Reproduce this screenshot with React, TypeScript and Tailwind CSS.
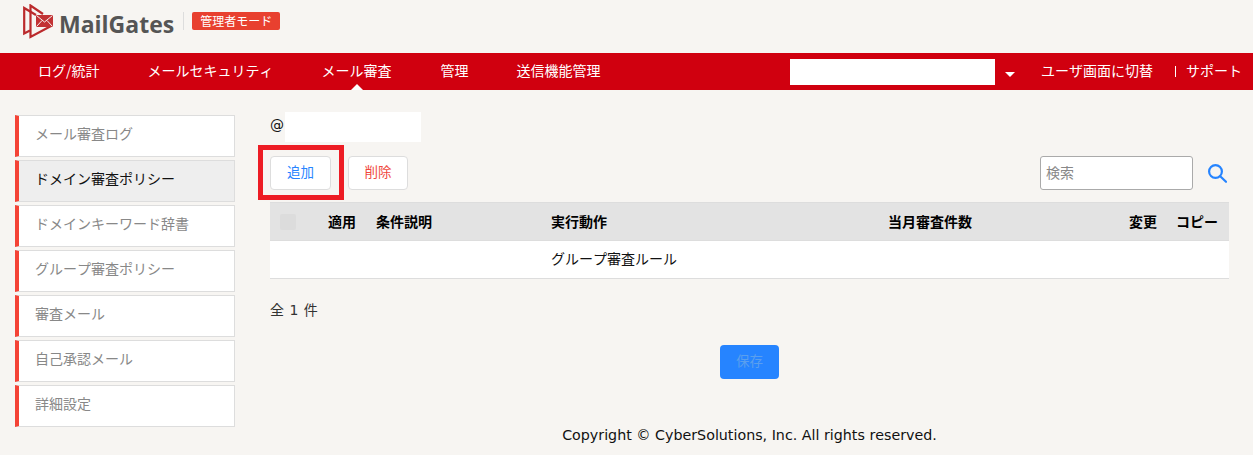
import React from "react";

const font = { fontFamily: '"Noto Sans CJK JP", sans-serif' };

const navItems = ["ログ/統計", "メールセキュリティ", "メール審査", "管理", "送信機能管理"];
const sideItems = ["メール審査ログ", "ドメイン審査ポリシー", "ドメインキーワード辞書", "グループ審査ポリシー", "審査メール", "自己承認メール", "詳細設定"];

function Logo() {
  return (
    <svg width="31" height="35" viewBox="0 0 31 35" className="shrink-0">
      <path d="M13 11 L1.2 4 L1.2 29.5 L7 26.5" fill="none" stroke="#bb2a2c" strokeWidth="2.2" />
      <path d="M20 10 L7.5 1.5 L7.5 33 L28 22" fill="none" stroke="#bb2a2c" strokeWidth="2.2" />
      <path d="M13 11 L30 11 L30 23 L13 23 Z" fill="#c23234" />
      <path d="M13.5 11.5 L21.5 18 L29.5 11.5 M13.5 22.5 L19 16.5 M29.5 22.5 L24 16.5" fill="none" stroke="#f7f5f2" strokeWidth="1" />
    </svg>
  );
}

export default function App() {
  return (
    <div style={font} className="relative w-[1253px] h-[455px] overflow-hidden bg-[#f7f5f2] text-[14px] text-[#111] [font-kerning:none]">
      <header className="h-[53px] flex items-center pl-[23px] pb-[11px]">
        <Logo />
        <span className="ml-[5px] mt-[6px] text-[23px] leading-none font-bold text-[#555]" style={{ fontFamily: '"Open Sans", sans-serif' }}>MailGates</span>
        <span className="ml-[9px] w-px h-[18px] bg-[#ddd]" />
        <span className="ml-[8px] w-[88px] h-[18px] rounded-[2px] bg-[#e8402f] text-white text-[12px] leading-[17px] text-center">管理者モード</span>
      </header>

      <nav className="relative h-[37px] bg-[#d0000f] text-white flex items-center pl-[38px]">
        <div className="flex gap-[48px]">
          {navItems.map((t, i) => (
            <span key={t} className={`relative h-[37px] leading-[34px] text-[14px] ${i === 3 ? "ml-[1px]" : ""}`}>
              {t}
              {i === 2 && <span className="absolute left-1/2 -translate-x-1/2 bottom-0 w-0 h-0 border-x-[6px] border-x-transparent border-b-[6px] border-b-white" />}
            </span>
          ))}
        </div>
        <div className="ml-auto flex items-center pr-[11px] h-[37px]">
          <div className="w-[205px] h-[26px] bg-white" />
          <span className="ml-[10px] mt-[5px] w-0 h-0 border-x-[5px] border-x-transparent border-t-[5px] border-t-white" />
          <span className="ml-[26px] leading-[34px] h-[37px]">ユーザ画面に切替</span>
          <span className="ml-[22px] w-px h-[11px] bg-white" />
          <span className="ml-[10px] leading-[34px] h-[37px]">サポート</span>
        </div>
      </nav>

      <div className="flex pl-[15px] pr-[24px]">
        <aside className="w-[220px] mt-[25px] flex flex-col gap-[3px] shrink-0">
          {sideItems.map((t, i) => (
            <div key={t} className={`h-[42px] border border-[#ddd] border-l-[4px] border-l-[#f44336] pl-[16px] leading-[34px] ${i === 1 ? "bg-[#eee] text-[#111]" : "bg-white text-[#888]"}`}>
              {t}
            </div>
          ))}
        </aside>

        <main className="flex-1 ml-[35px]">
          <div className="mt-[22px] h-[30px] flex items-center">
            <span className="w-[15px] text-[14px] leading-[26px] h-[30px]" style={{ fontFamily: '"DejaVu Sans", sans-serif' }}>@</span>
            <div className="w-[136px] h-[30px] bg-white" />
          </div>

          <div className="mt-[14px] h-[34px] flex items-center">
            <button className="w-[61px] h-[34px] pb-[3px] rounded-[4px] border border-[#ddd] bg-white text-[#2684ff] text-[13.5px]">追加</button>
            <button className="ml-[17px] w-[60px] h-[34px] pb-[3px] rounded-[4px] border border-[#ddd] bg-white text-[#f0483e] text-[13.5px]">削除</button>
            <div className="ml-auto w-[153px] h-[34px] rounded-[3px] border border-[#aaa] bg-white pl-[5px] text-[#888] text-[14px] leading-[30px]">検索</div>
            <svg className="ml-[14px] mr-[2px]" width="20" height="20" viewBox="0 0 20 20" fill="none" stroke="#2684ff" strokeWidth="2.2">
              <circle cx="8.5" cy="8.5" r="6.4" />
              <path d="M13.2 13.2 L19 18.8" strokeLinecap="round" />
            </svg>
          </div>

          <div className="mt-[12px] grid grid-cols-[58px_48px_175px_337px_241px_47px_1fr] h-[39px] items-center bg-[#e3e3e3] border-y border-[#ddd] font-bold text-[14px] leading-[20px] text-black">
            <span className="pl-[10px]"><span className="block mt-[1px] w-[16px] h-[16px] rounded-[2px] bg-[#dcdcdc]" /></span>
            <span className="pb-[2px]">適用</span>
            <span className="pb-[2px]">条件説明</span>
            <span className="pb-[2px]">実行動作</span>
            <span className="pb-[2px]">当月審査件数</span>
            <span className="pb-[2px]">変更</span>
            <span className="pb-[2px]">コピー</span>
          </div>
          <div className="grid grid-cols-[281px_1fr] h-[38px] items-center bg-white border-b border-[#ddd] text-[14px]">
            <span />
            <span className="pb-[2px]">グループ審査ルール</span>
          </div>

          <p className="mt-[21px] leading-[20px] text-[14px] text-[#333] [word-spacing:1px]" style={{ fontFamily: '"DejaVu Sans", "Noto Sans CJK JP", sans-serif' }}>全 1 件</p>

          <div className="mt-[25px] flex justify-center">
            <button className="w-[59px] h-[34px] pb-[3px] rounded-[4px] bg-[#2684ff] text-[#5a9fee] text-[13.5px]">保存</button>
          </div>

          <p className="mt-[46px] text-center text-[14.25px] leading-[20px] text-[#111]" style={{ fontFamily: '"DejaVu Sans", sans-serif' }}>
            Copyright © CyberSolutions, Inc. All rights reserved.
          </p>
        </main>
      </div>

      <div className="absolute left-[258px] top-[145px] w-[86px] h-[55px] border-[5px] border-[#ed1c24] pointer-events-none" />
    </div>
  );
}
